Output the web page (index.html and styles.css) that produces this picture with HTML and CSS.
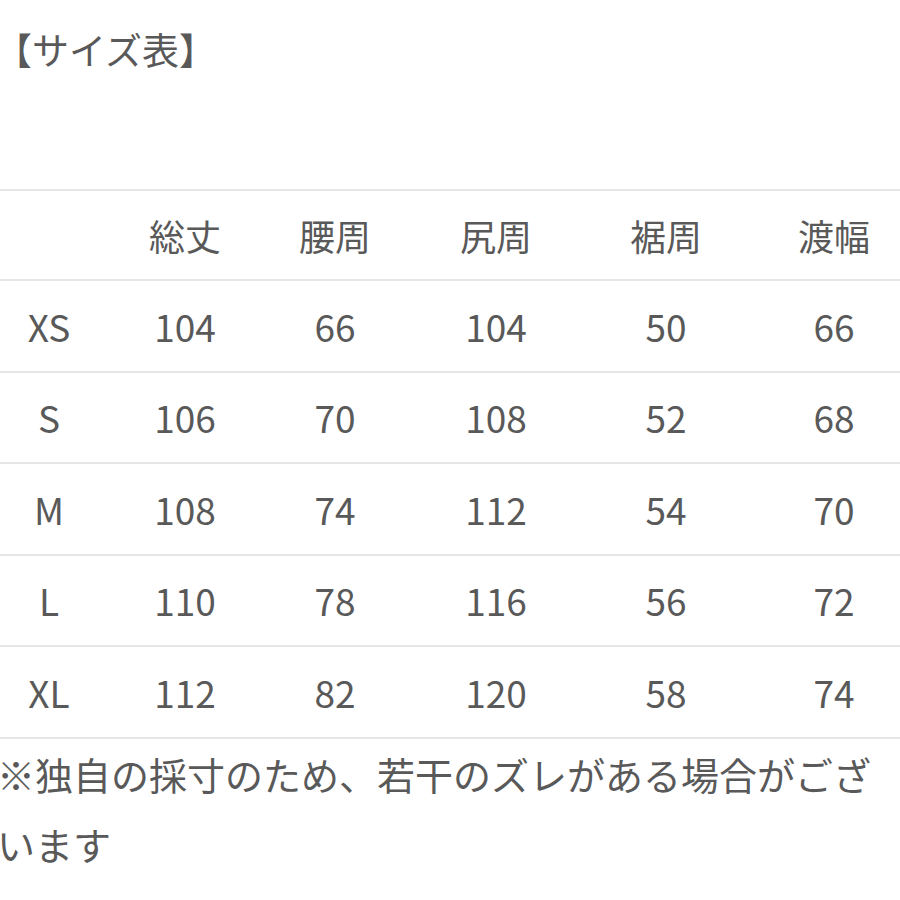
FILE: index.html
```html
<!DOCTYPE html>
<html lang="ja">
<head>
<meta charset="utf-8">
<link rel="stylesheet" href="styles.css">
</head>
<body>
<div class="page">
  <div class="title">【サイズ表】</div>
  <div class="table">
    <div class="row head">
      <div class="cell"></div>
      <div class="cell">総丈</div>
      <div class="cell">腰周</div>
      <div class="cell">尻周</div>
      <div class="cell">裾周</div>
      <div class="cell">渡幅</div>
    </div>
    <div class="row">
      <div class="cell">XS</div>
      <div class="cell">104</div>
      <div class="cell">66</div>
      <div class="cell">104</div>
      <div class="cell">50</div>
      <div class="cell">66</div>
    </div>
    <div class="row">
      <div class="cell">S</div>
      <div class="cell">106</div>
      <div class="cell">70</div>
      <div class="cell">108</div>
      <div class="cell">52</div>
      <div class="cell">68</div>
    </div>
    <div class="row">
      <div class="cell">M</div>
      <div class="cell">108</div>
      <div class="cell">74</div>
      <div class="cell">112</div>
      <div class="cell">54</div>
      <div class="cell">70</div>
    </div>
    <div class="row">
      <div class="cell">L</div>
      <div class="cell">110</div>
      <div class="cell">78</div>
      <div class="cell">116</div>
      <div class="cell">56</div>
      <div class="cell">72</div>
    </div>
    <div class="row">
      <div class="cell">XL</div>
      <div class="cell">112</div>
      <div class="cell">82</div>
      <div class="cell">120</div>
      <div class="cell">58</div>
      <div class="cell">74</div>
    </div>
  </div>
  <p class="note">※独自の採寸のため、若干のズレがある場合がございます</p>
</div>
</body>
</html>
```
FILE: styles.css
```css
html, body {
  margin: 0;
  padding: 0;
  background: #ffffff;
  overflow: hidden;
}
body {
  font-family: "Noto Sans CJK JP", "Noto Sans", sans-serif;
  color: #595959;
  width: 900px;
  height: 900px;
}
.page {
  width: 900px;
}
.title {
  font-size: 37px;
  line-height: 50px;
  margin-top: 24px;
  margin-left: -5px;
}
.table {
  margin-top: 115px;
  border-top: 2px solid #e6e6e6;
}
.row {
  display: grid;
  grid-template-columns: 98px 174px 126px 196px 144px 192px;
  height: 91.5px;
  box-sizing: border-box;
  border-bottom: 2px solid #e6e6e6;
  align-items: center;
  font-size: 37px;
}
.row.head {
  height: 90px;
  font-size: 36px;
}
.cell {
  text-align: center;
  white-space: nowrap;
}
.note {
  margin: 0 0 0 -3px;
  width: 885px;
  font-size: 38px;
  line-height: 70px;
}
```
